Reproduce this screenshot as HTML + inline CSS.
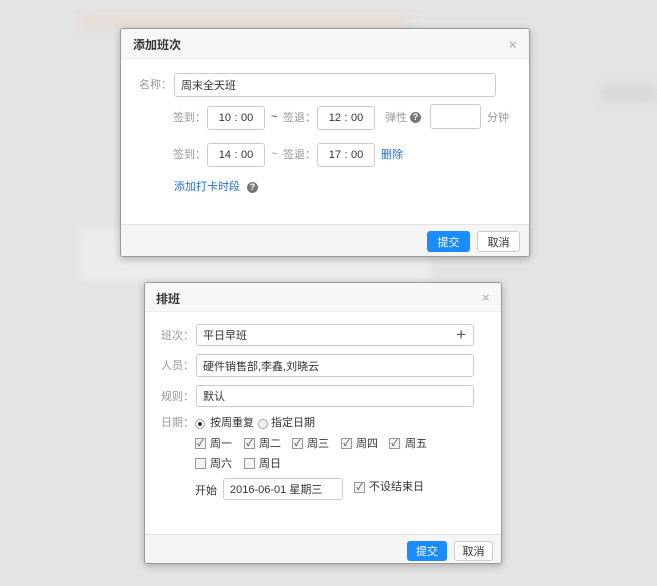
<!DOCTYPE html>
<html><head><meta charset="utf-8"><style>
*{box-sizing:border-box;margin:0;padding:0}
body{width:657px;height:586px;overflow:hidden;background:#e4e4e4;font-family:"Liberation Sans","Noto Sans CJK SC",sans-serif;font-size:11px;color:#333;position:relative}
.a{position:absolute}
.dlg{position:absolute;background:#fff;border:1px solid #9a9a9a;border-radius:3px;box-shadow:0 2px 8px rgba(0,0,0,.25);overflow:hidden}
.hd{position:absolute;left:0;right:0;top:0;background:#f7f7f7;border-bottom:1px solid #eee}
.ft{position:absolute;left:0;right:0;bottom:0;background:#f5f5f5;border-top:1px solid #e3e3e3}
.t{position:absolute;font-weight:bold;font-size:12px;color:#333}
.x{position:absolute;color:#bbb;font-size:13px;font-weight:bold}
.in{position:absolute;border:1px solid #ccc;border-radius:3px;background:#fff;padding-left:6px;display:flex;align-items:center;color:#333}
.lb{position:absolute;color:#999;line-height:14px}
.btn{position:absolute;border-radius:3px;display:flex;align-items:center;justify-content:center;font-size:11px}
.b1{background:#1a8cff;color:#fff}
.b2{background:#fff;border:1px solid #ccc;color:#333}
.q{position:absolute;width:11px;height:11px;border-radius:50%;background:#777;color:#fff;font-size:9px;font-weight:bold;text-align:center;line-height:11px}
.cb{position:absolute;width:11px;height:11px;border:1px solid #999;background:#f4f4f4;font-size:9px;color:#235;line-height:9px;text-align:center}
.tx{position:absolute;line-height:14px;color:#333}
.ti{justify-content:center;padding:0}
.ti span{display:inline-block;width:10px;text-align:center}
</style></head><body>
<div class="a" style="left:0;top:0;width:657px;height:10px;background:#e6e6e6"></div>
<div class="a" style="left:80px;top:15px;width:330px;height:14px;background:#e8dcd5;filter:blur(5px)"></div>
<div class="a" style="left:80px;top:230px;width:350px;height:50px;background:#ececec;filter:blur(4px)"></div>
<div class="a" style="left:600px;top:85px;width:57px;height:18px;background:#d8d8d8;filter:blur(5px)"></div>

<div class="dlg" style="left:120px;top:28px;width:410px;height:229px">
 <div class="hd" style="height:30px"></div>
 <div class="t" style="left:12px;top:7px">添加班次</div>
 <div class="x" style="left:388px;top:8px">×</div>
 <div class="lb" style="left:18px;top:49px">名称：</div>
 <div class="in" style="left:53px;top:44px;width:322px;height:24px">周末全天班</div>
 <div class="lb" style="left:52px;top:82px">签到：</div>
 <div class="in ti" style="left:86px;top:77px;width:58px;height:24px">10<span>:</span>00</div>
 <div class="tx" style="left:150px;top:81px">~</div>
 <div class="lb" style="left:162px;top:82px">签退：</div>
 <div class="in ti" style="left:196px;top:77px;width:58px;height:24px">12<span>:</span>00</div>
 <div class="lb" style="left:264px;top:82px">弹性</div>
 <div class="q" style="left:289px;top:83px">?</div>
 <div class="in" style="left:309px;top:75px;width:51px;height:25px"></div>
 <div class="lb" style="left:366px;top:82px">分钟</div>
 <div class="lb" style="left:52px;top:119px">签到：</div>
 <div class="in ti" style="left:86px;top:114px;width:58px;height:24px">14<span>:</span>00</div>
 <div class="tx" style="left:150px;top:118px;color:#999">~</div>
 <div class="lb" style="left:162px;top:119px">签退：</div>
 <div class="in ti" style="left:196px;top:114px;width:58px;height:24px">17<span>:</span>00</div>
 <div class="tx" style="left:260px;top:119px;color:#1e6fd0">删除</div>
 <div class="tx" style="left:53px;top:151px;color:#1e6fd0">添加打卡时段</div>
 <div class="q" style="left:126px;top:153px">?</div>
 <div class="ft" style="height:32px"></div>
 <div class="btn b1" style="left:306px;top:202px;width:43px;height:21px">提交</div>
 <div class="btn b2" style="left:356px;top:202px;width:43px;height:21px">取消</div>
</div>

<div class="dlg" style="left:144px;top:282px;width:358px;height:282px">
 <div class="hd" style="height:29px"></div>
 <div class="t" style="left:11px;top:7px">排班</div>
 <div class="x" style="left:337px;top:7px">×</div>
 <div class="lb" style="left:16px;top:46px">班次：</div>
 <div class="in" style="left:51px;top:41px;width:278px;height:22px">平日早班<span style="position:absolute;right:7px;top:0px;font-size:17px;color:#555;line-height:20px">+</span></div>
 <div class="lb" style="left:16px;top:76px">人员：</div>
 <div class="in" style="left:51px;top:71px;width:278px;height:23px">硬件销售部,李鑫,刘晓云</div>
 <div class="lb" style="left:16px;top:107px">规则：</div>
 <div class="in" style="left:51px;top:102px;width:278px;height:22px">默认</div>
 <div class="lb" style="left:16px;top:133px">日期：</div>
 <div class="a" style="left:50px;top:136px;width:10px;height:10px;border-radius:50%;border:1px solid #999;background:#fff"><div style="margin:2px;width:4px;height:4px;border-radius:50%;background:#235"></div></div>
 <div class="tx" style="left:65px;top:133px">按周重复</div>
 <div class="a" style="left:113px;top:136px;width:10px;height:10px;border-radius:50%;border:1px solid #aaa;background:#eee"></div>
 <div class="tx" style="left:126px;top:133px">指定日期</div>
 <div class="cb" style="left:50px;top:155px">✓</div><div class="tx" style="left:65px;top:154px">周一</div>
 <div class="cb" style="left:99px;top:155px">✓</div><div class="tx" style="left:114px;top:154px">周二</div>
 <div class="cb" style="left:147px;top:155px">✓</div><div class="tx" style="left:162px;top:154px">周三</div>
 <div class="cb" style="left:196px;top:155px">✓</div><div class="tx" style="left:211px;top:154px">周四</div>
 <div class="cb" style="left:244px;top:155px">✓</div><div class="tx" style="left:260px;top:154px">周五</div>
 <div class="cb" style="left:50px;top:175px"></div><div class="tx" style="left:65px;top:174px">周六</div>
 <div class="cb" style="left:99px;top:175px"></div><div class="tx" style="left:114px;top:174px">周日</div>
 <div class="tx" style="left:50px;top:201px">开始</div>
 <div class="in" style="left:78px;top:195px;width:120px;height:22px">2016-06-01 星期三</div>
 <div class="cb" style="left:209px;top:199px">✓</div><div class="tx" style="left:224px;top:197px">不设结束日</div>
 <div class="ft" style="height:29px"></div>
 <div class="btn b1" style="left:262px;top:258px;width:40px;height:20px">提交</div>
 <div class="btn b2" style="left:309px;top:258px;width:39px;height:20px">取消</div>
</div>
</body></html>
